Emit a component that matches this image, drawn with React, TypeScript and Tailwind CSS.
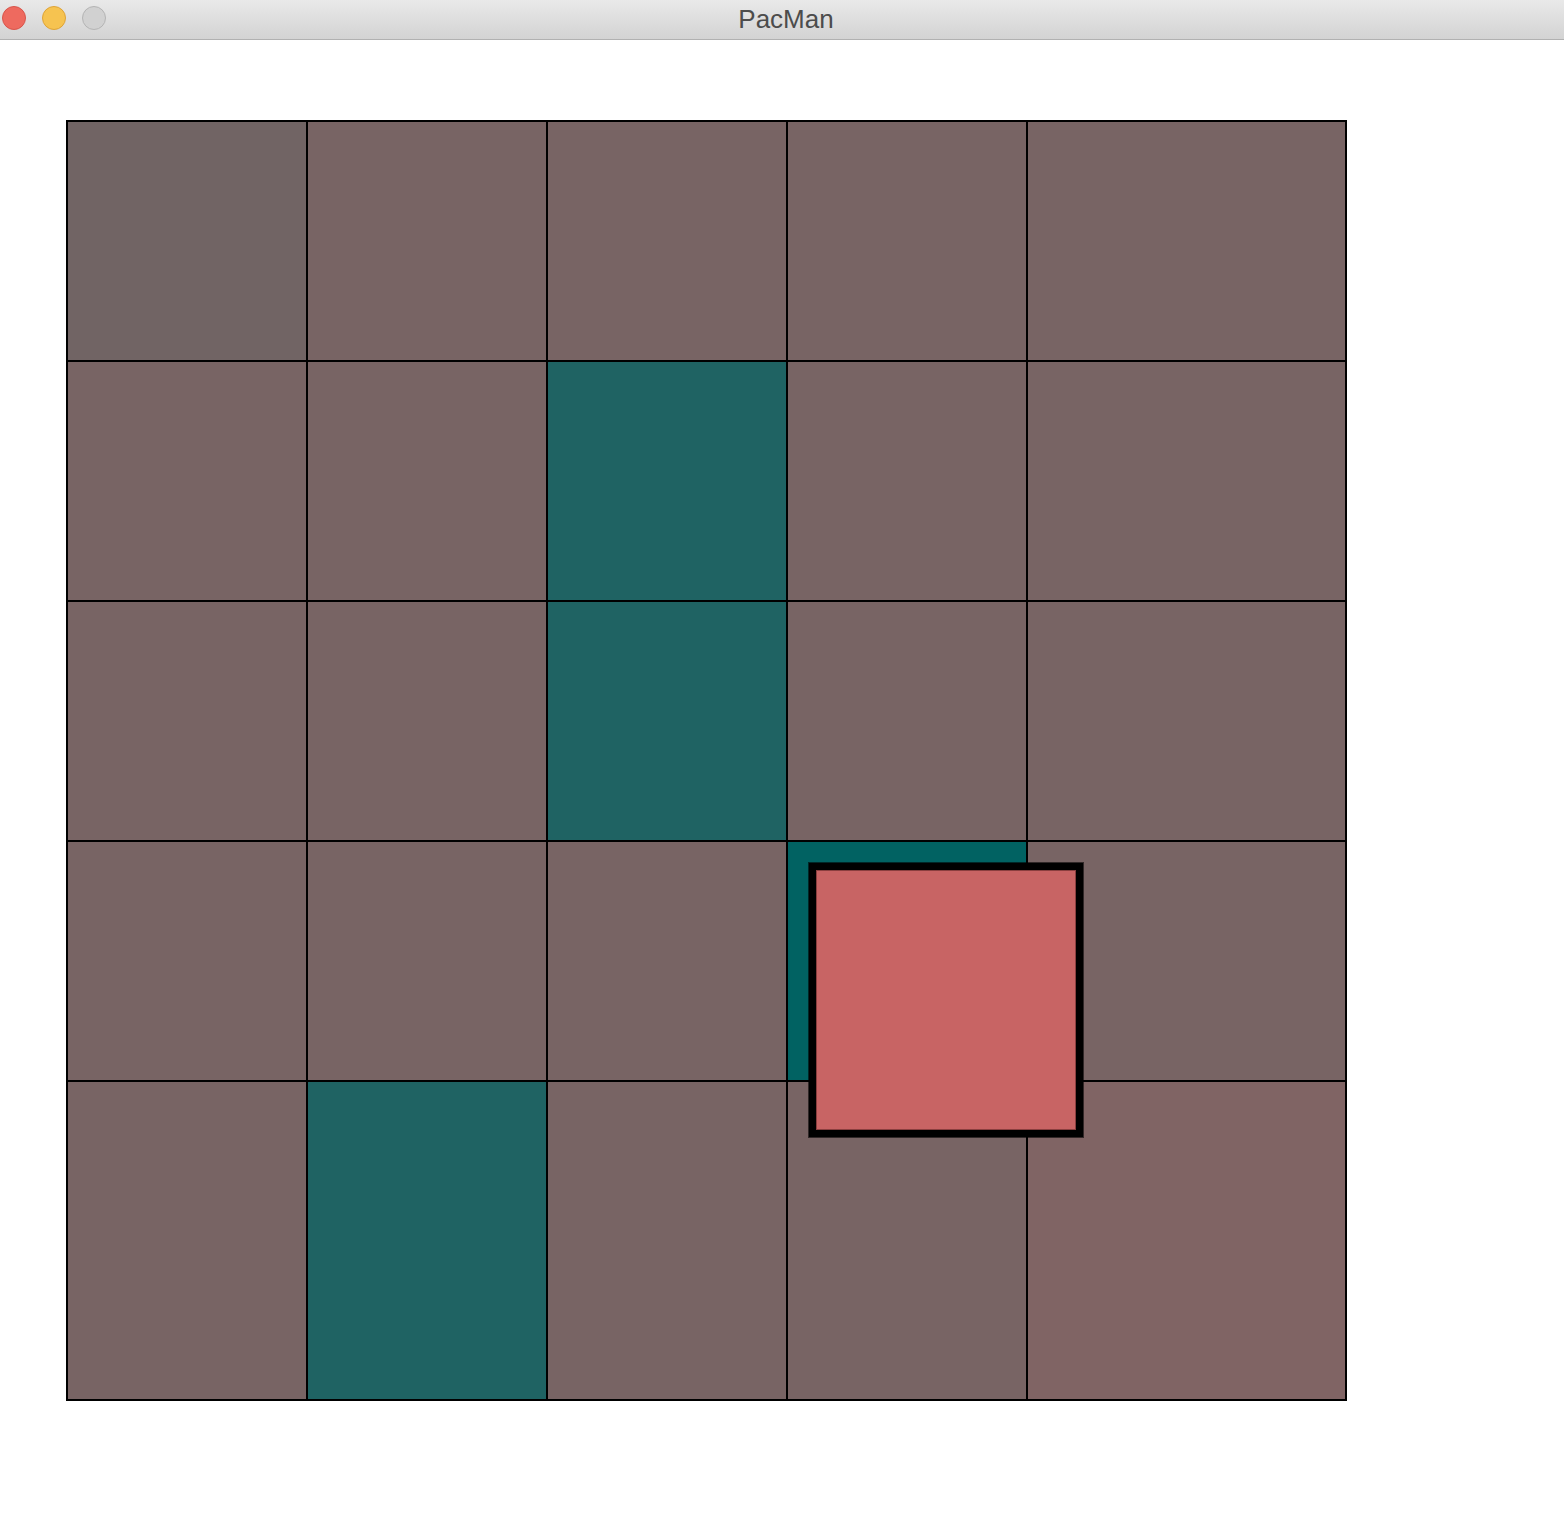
import React from 'react';

type Cell = 'wall' | 'dim' | 'path' | 'deep' | 'warm';

const board: Cell[][] = [
  ['dim', 'wall', 'wall', 'wall', 'wall'],
  ['wall', 'wall', 'path', 'wall', 'wall'],
  ['wall', 'wall', 'path', 'wall', 'wall'],
  ['wall', 'wall', 'wall', 'deep', 'wall'],
  ['wall', 'path', 'wall', 'wall', 'warm'],
];

const cellColor: Record<Cell, string> = {
  wall: 'bg-[#786464]',
  dim: 'bg-[#716464]',
  path: 'bg-[#1f6363]',
  deep: 'bg-[#016262]',
  warm: 'bg-[#806464]',
};

const TitleBar: React.FC = () => (
  <header className="relative h-10 flex items-center justify-center bg-gradient-to-b from-[#e9e9e9] to-[#d3d3d3] border-b border-[#b1b1b1]">
    <div className="absolute left-[2px] top-[6px] flex gap-4">
      <span className="w-6 h-6 rounded-full bg-[#ee6a5f] border border-[#d8554b]" />
      <span className="w-6 h-6 rounded-full bg-[#f6c350] border border-[#dea337]" />
      <span className="w-6 h-6 rounded-full bg-[#d1d1d1] border border-[#b4b4b4]" />
    </div>
    <h1 className="ml-2 text-[26px] leading-none text-[#4c4c4c] font-['Liberation_Sans',Arial,sans-serif] pb-[1px]">PacMan</h1>
  </header>
);

export default function App() {
  return (
    <div className="w-[1564px] h-[1516px] bg-white">
      <TitleBar />
      <main className="pl-[66px] pt-[80px]">
        <div className="relative w-fit border border-black">
          <div className="grid grid-cols-[240px_240px_240px_240px_319px] grid-rows-[240px_240px_240px_240px_319px]">
            {board.map((row, r) =>
              row.map((c, i) => (
                <div key={`${r}-${i}`} className={`border border-black ${cellColor[c]}`} />
              ))
            )}
          </div>
          {/* player piece */}
          <div className="absolute left-[741px] top-[741px] w-[276px] h-[276px] border border-black/60">
            <div className="w-full h-full border-[7px] border-black">
              <div className="w-full h-full bg-[#c86464] border border-[#8a3f3f]" />
            </div>
          </div>
        </div>
      </main>
    </div>
  );
}
